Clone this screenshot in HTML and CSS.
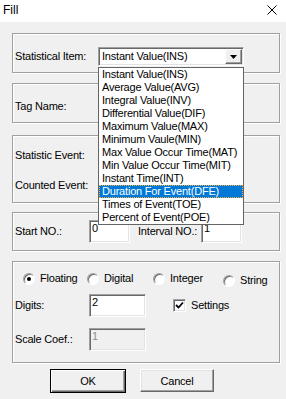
FILE: index.html
```html
<!DOCTYPE html>
<html>
<head>
<meta charset="utf-8">
<link rel="stylesheet" href="styles.css">
</head>
<body>
<div class="titlebar">
  <span class="title">Fill</span>
  <svg class="close" width="10" height="10" viewBox="0 0 10 10"><path d="M0.5 0.5 L9.5 9.5 M9.5 0.5 L0.5 9.5" stroke="#000" stroke-width="1" fill="none"/></svg>
</div>
<div class="dialog">
  <div class="group g1">
    <div class="row">
      <span class="lbl lbl-item">Statistical Item:</span>
      <div class="combo">
        <span class="combo-text">Instant Value(INS)</span>
        <span class="combo-btn"><svg width="7" height="4" viewBox="0 0 7 4"><path d="M0 0 H7 L3.5 4 Z" fill="#000"/></svg></span>
        <ul class="droplist">
          <li>Instant Value(INS)</li>
          <li>Average Value(AVG)</li>
          <li>Integral Value(INV)</li>
          <li>Differential Value(DIF)</li>
          <li>Maximum Value(MAX)</li>
          <li>Minimum Vaule(MIN)</li>
          <li>Max Value Occur Time(MAT)</li>
          <li>Min Value Occur Time(MIT)</li>
          <li>Instant Time(INT)</li>
          <li class="sel">Duration For Event(DFE)</li>
          <li>Times of Event(TOE)</li>
          <li>Percent of Event(POE)</li>
        </ul>
      </div>
    </div>
  </div>
  <div class="group g2">
    <span class="lbl">Tag Name:</span>
  </div>
  <div class="group g3">
    <span class="lbl">Statistic Event:</span>
    <span class="lbl">Counted Event:</span>
  </div>
  <div class="group g4">
    <div class="row">
      <span class="lbl lbl-start">Start NO.:</span>
      <div class="edit edit-small">0</div>
      <span class="lbl lbl-interval">Interval NO.:</span>
      <div class="edit edit-small">1</div>
    </div>
  </div>
  <div class="group g5">
    <div class="radios">
      <label class="radio r1"><span class="rcircle on"></span>Floating</label>
      <label class="radio r2"><span class="rcircle"></span>Digital</label>
      <label class="radio r3"><span class="rcircle"></span>Integer</label>
      <label class="radio r4"><span class="rcircle"></span>String</label>
    </div>
    <div class="row row-digits">
      <span class="lbl lbl-start">Digits:</span>
      <div class="edit edit-wide">2</div>
      <span class="check"><svg width="9" height="9" viewBox="0 0 9 9"><path d="M1 4 L3.5 6.5 L8 1.5" stroke="#000" stroke-width="1.8" fill="none"/></svg></span>
      <span class="lbl">Settings</span>
    </div>
    <div class="row row-scale">
      <span class="lbl lbl-start">Scale Coef.:</span>
      <div class="edit edit-wide disabled">1</div>
    </div>
  </div>
  <div class="buttons">
    <button class="btn btn-ok">OK</button>
    <button class="btn btn-cancel">Cancel</button>
  </div>
</div>
</body>
</html>
```

FILE: styles.css
```css
* { box-sizing: border-box; }
html, body { margin: 0; padding: 0; }
body {
  width: 286px;
  height: 399px;
  background: #f0f0f0;
  font-family: "Liberation Sans", Arial, sans-serif;
  font-size: 11px;
  letter-spacing: -0.2px;
  color: #000;
  overflow: hidden;
}
.titlebar {
  height: 22px;
  background: #fff;
  display: flex;
  align-items: center;
  justify-content: space-between;
  padding: 0 9px 0 3px;
}
.title { font-size: 12px; line-height: 14px; margin-top: -2px; letter-spacing: 0; }
.close { display: block; margin-top: -2px; }

.dialog { padding: 0 6px 0 12px; }
.group {
  border: 1px solid #a0a0a0;
  box-shadow: inset 1px 1px 0 #fff, 1px 1px 0 #fff;
  padding-left: 2px;
  position: relative;
}
.g1 { margin-top: 11px; height: 40px; padding-top: 13px; }
.g2 { margin-top: 10px; height: 40px; padding-top: 16px; }
.g3 { margin-top: 12px; height: 68px; padding-top: 13px; display: flex; flex-direction: column; gap: 17px; }
.g4 { margin-top: 9px; height: 39px; padding-top: 7px; }
.g5 { margin-top: 10px; height: 102px; padding-top: 10px; }

.lbl { display: block; line-height: 13px; white-space: nowrap; }
.row { display: flex; align-items: center; }
.lbl-item { width: 83px; }

.combo {
  position: relative;
  width: 146px;
  height: 19px;
  background: #fff;
  border: 1px solid;
  border-color: #a0a0a0 #fff #fff #a0a0a0;
  box-shadow: inset 1px 1px 0 #696969, inset -1px -1px 0 #e3e3e3;
  display: flex;
  align-items: center;
}
.combo-text { padding-left: 3px; flex: 1; line-height: 13px; }
.combo-btn {
  width: 17px;
  height: 15px;
  margin-right: 1px;
  background: #f0f0f0;
  border: 1px solid;
  border-color: #fff #696969 #696969 #fff;
  box-shadow: inset -1px -1px 0 #a0a0a0;
  display: flex;
  align-items: center;
  justify-content: center;
}
.combo-btn svg { display: block; }

.droplist {
  position: absolute;
  left: -1px;
  top: 19px;
  width: 146px;
  margin: 0;
  padding: 0;
  list-style: none;
  background: #fff;
  border: 1px solid #646464;
  z-index: 5;
}
.droplist li {
  height: 13px;
  line-height: 13px;
  padding-left: 3px;
  white-space: nowrap;
}
.droplist li.sel {
  background: #0078d7;
  color: #fff;
  outline: 1px dotted #f5b041;
  outline-offset: -1px;
}

.edit {
  height: 23px;
  background: #fff;
  border: 1px solid;
  border-color: #a0a0a0 #fff #fff #a0a0a0;
  box-shadow: inset 1px 1px 0 #696969, inset -1px -1px 0 #e3e3e3;
  padding: 1px 0 0 2px;
  line-height: 13px;
}
.edit.disabled { background: #f0f0f0; color: #8d8d8d; }
.edit-small { width: 41px; }
.edit-wide { width: 57px; }
.lbl-start { width: 74px; }
.lbl-interval { width: 63px; margin-left: 8px; }

.radios { display: flex; align-items: flex-start; padding-left: 8px; height: 13px; }
.radio { display: flex; align-items: center; gap: 5px; line-height: 13px; }
.r1 { width: 64px; }
.r2 { width: 66px; }
.r3 { width: 70px; }
.r4 { margin-top: 2px; }
.rcircle {
  width: 12px;
  height: 12px;
  border-radius: 50%;
  background: #fff;
  border: 1px solid;
  border-color: #a0a0a0 #fff #fff #a0a0a0;
  box-shadow: inset 1px 1px 0 #696969;
  position: relative;
}
.rcircle.on::after {
  content: "";
  position: absolute;
  left: 3px;
  top: 3px;
  width: 4px;
  height: 4px;
  border-radius: 50%;
  background: #000;
}

.row-digits { margin-top: 9px; }
.row-scale { margin-top: 11px; }
.check {
  width: 13px;
  height: 13px;
  margin-left: 27px;
  margin-right: 5px;
  background: #fff;
  border: 1px solid;
  border-color: #a0a0a0 #fff #fff #a0a0a0;
  box-shadow: inset 1px 1px 0 #696969, inset -1px -1px 0 #e3e3e3;
  display: flex;
  align-items: center;
  justify-content: center;
}
.check svg { display: block; }

.buttons { margin-top: 6px; padding-left: 38px; display: flex; gap: 14px; }
.btn {
  font-family: "Liberation Sans", Arial, sans-serif;
  font-size: 11px;
  letter-spacing: -0.2px;
  color: #000;
  background: #f0f0f0;
  height: 23px;
  padding: 0;
  border: 1px solid;
  border-color: #fff #696969 #696969 #fff;
  box-shadow: inset -1px -1px 0 #a0a0a0, inset 1px 1px 0 #e3e3e3;
}
.btn-ok {
  width: 76px;
  height: 24px;
  border: 1px solid #000;
  box-shadow: inset 1px 1px 0 #fff, inset -1px -1px 0 #696969, inset -2px -2px 0 #a0a0a0;
}
.btn-cancel { width: 74px; }
```
